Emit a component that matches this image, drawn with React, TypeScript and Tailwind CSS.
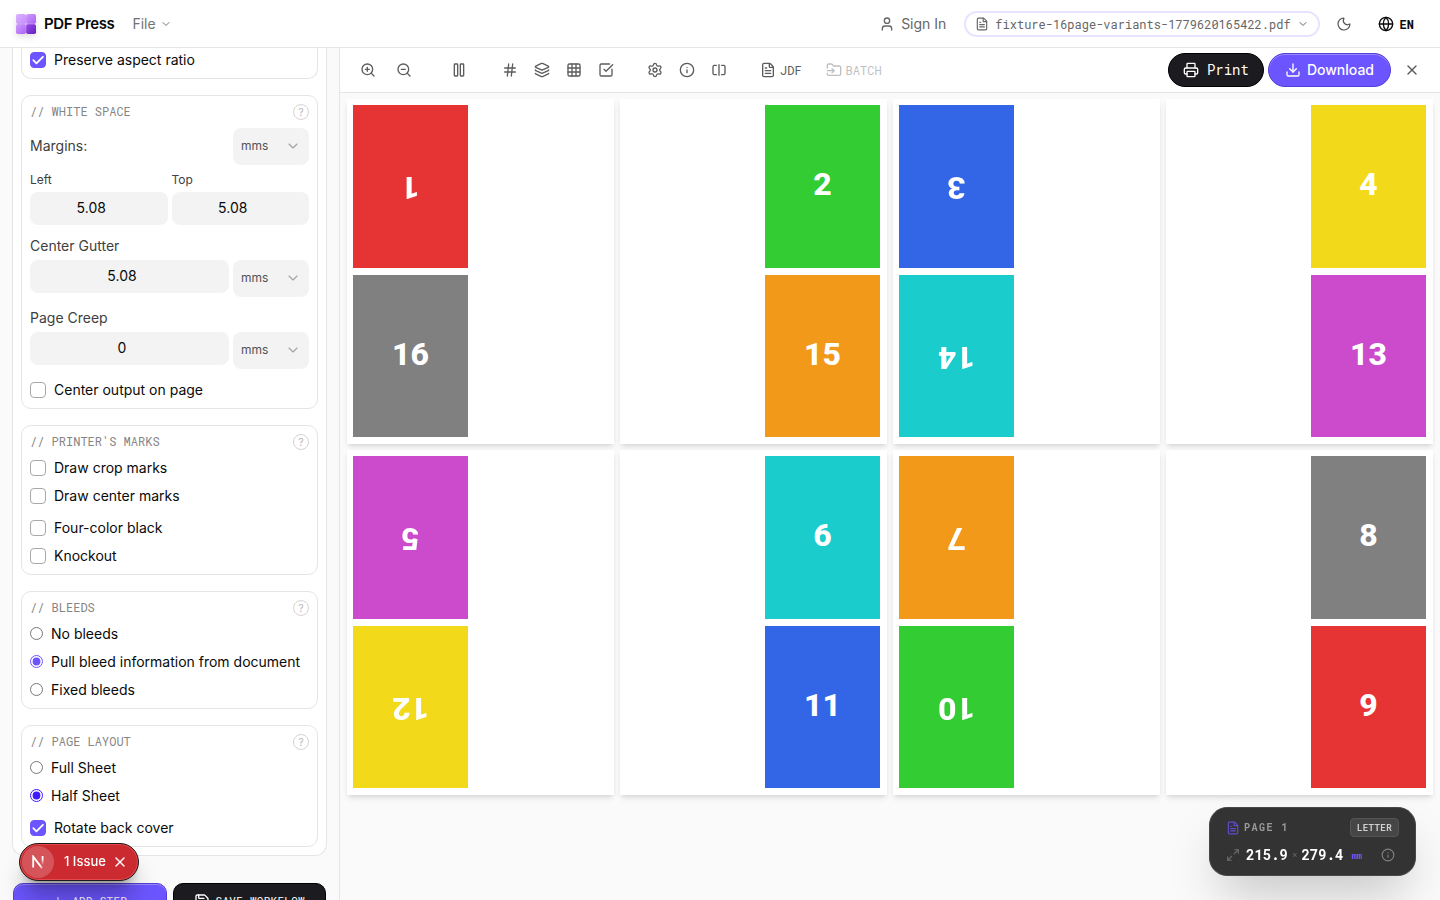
import { useState, type ReactNode } from 'react';
import {
  ChevronDown,
  Download,
  FileText,
  FolderInput,
  Globe,
  Grid3x3,
  Hash,
  Info,
  Layers,
  Maximize2,
  Moon,
  Pause,
  Plus,
  Printer,
  Save,
  Settings,
  SquareCheckBig,
  SquareSplitHorizontal,
  User,
  X,
  ZoomIn,
  ZoomOut,
} from 'lucide-react';

interface PageCell {
  label: number;
  color: string;
  flipped?: boolean;
}

const RED = 'bg-[#e63333]';
const GREEN = 'bg-[#33cc33]';
const BLUE = 'bg-[#3366e6]';
const YELLOW = 'bg-[#f2d91a]';
const MAGENTA = 'bg-[#cc4acc]';
const CYAN = 'bg-[#1acccc]';
const ORANGE = 'bg-[#f2991a]';
const GRAY = 'bg-[#808080]';

const sheets: PageCell[][] = [
  [{ label: 1, color: RED, flipped: true }, { label: 16, color: GRAY }],
  [{ label: 2, color: GREEN }, { label: 15, color: ORANGE }],
  [{ label: 3, color: BLUE, flipped: true }, { label: 14, color: CYAN, flipped: true }],
  [{ label: 4, color: YELLOW }, { label: 13, color: MAGENTA }],
  [{ label: 5, color: MAGENTA, flipped: true }, { label: 12, color: YELLOW, flipped: true }],
  [{ label: 6, color: CYAN }, { label: 11, color: BLUE }],
  [{ label: 7, color: ORANGE, flipped: true }, { label: 10, color: GREEN, flipped: true }],
  [{ label: 8, color: GRAY }, { label: 9, color: RED }],
];

const mono = "font-['Roboto_Mono','Liberation_Mono',monospace]";

function Logo() {
  return (
    <svg viewBox="0 0 20 20" className="w-5 h-5 drop-shadow-md" aria-hidden="true">
      <defs>
        <linearGradient id="lg-a" x1="0" y1="0" x2="1" y2="1">
          <stop offset="0" stopColor="#dcb4fe" />
          <stop offset="1" stopColor="#c48bfb" />
        </linearGradient>
        <linearGradient id="lg-b" x1="0" y1="0" x2="1" y2="1">
          <stop offset="0" stopColor="#cf9dfc" />
          <stop offset="1" stopColor="#ab62f3" />
        </linearGradient>
        <linearGradient id="lg-c" x1="0" y1="0" x2="1" y2="1">
          <stop offset="0" stopColor="#9a4de8" />
          <stop offset="1" stopColor="#6420bd" />
        </linearGradient>
      </defs>
      <rect x="1" y="1" width="18" height="18" fill="#d6b0fa" />
      <rect width="9.8" height="9.8" rx="1.8" fill="url(#lg-a)" />
      <rect x="10.2" width="9.8" height="9.8" rx="1.8" fill="url(#lg-b)" />
      <rect y="10.2" width="9.8" height="9.8" rx="1.8" fill="url(#lg-b)" />
      <rect x="10.2" y="10.2" width="9.8" height="9.8" rx="1.8" fill="url(#lg-c)" />
    </svg>
  );
}

function Section({ title, children }: { title: string; children: ReactNode }) {
  return (
    <section className="border border-[#e5e5e5] rounded-[10px] p-2">
      <div className="flex items-start justify-between h-4 mb-2">
        <h3 className={`${mono} text-xs leading-[14px] text-[#858585] uppercase`}>// {title}</h3>
        <button
          type="button"
          aria-label={`Help: ${title}`}
          className="w-4 h-4 rounded-full border border-[#d4d4d4] text-[10px] leading-none text-[#b5b5b5] flex items-center justify-center"
        >
          ?
        </button>
      </div>
      {children}
    </section>
  );
}

function Check({ label, defaultChecked = false }: { label: string; defaultChecked?: boolean }) {
  return (
    <label className="flex items-center gap-2 h-5 text-sm text-[#0a0a0a]">
      <span className="relative flex w-4 h-4">
        <input
          type="checkbox"
          defaultChecked={defaultChecked}
          className="peer appearance-none w-4 h-4 rounded-[4px] border border-[#a8a8a8] bg-white checked:bg-[#6c55ff] checked:border-[#6c55ff]"
        />
        <svg
          viewBox="0 0 16 16"
          className="absolute inset-0 w-4 h-4 hidden peer-checked:block pointer-events-none"
          fill="none"
          stroke="white"
          strokeWidth="1.8"
          strokeLinecap="round"
          strokeLinejoin="round"
        >
          <path d="M3.3 8.2 6.4 11.3 12.9 4.8" />
        </svg>
      </span>
      {label}
    </label>
  );
}

interface RadioProps {
  name: string;
  label: string;
  accent: string;
  defaultChecked?: boolean;
}

function Radio({ name, label, accent, defaultChecked = false }: RadioProps) {
  return (
    <label className="flex items-center gap-2 h-5 text-sm text-[#0a0a0a]">
      <input type="radio" name={name} defaultChecked={defaultChecked} className={`w-[13px] h-[13px] mb-px ${accent}`} />
      {label}
    </label>
  );
}

function NumberField({ id, initial }: { id: string; initial: string }) {
  const [value, setValue] = useState(initial);
  return (
    <input
      id={id}
      type="text"
      inputMode="decimal"
      value={value}
      onChange={(e) => setValue(e.target.value)}
      className="flex-1 min-w-0 w-full h-[33px] pl-2 pr-[23px] pb-0.5 rounded-lg bg-[#f3f3f3] text-sm text-center text-[#0a0a0a]"
    />
  );
}

function UnitSelect({ label }: { label: string }) {
  return (
    <div className="relative w-[76px] shrink-0">
      <select
        aria-label={label}
        className="appearance-none w-full h-[37px] px-2 pb-0.5 rounded-lg bg-[#f3f3f3] text-xs text-[#525252]"
      >
        <option>mms</option>
        <option>inches</option>
        <option>points</option>
      </select>
      <ChevronDown
        className="absolute right-2 top-2.5 w-4 h-4 text-[#a3a3a3] pointer-events-none"
        strokeWidth={1.75}
      />
    </div>
  );
}

function Tool({ label, children }: { label: string; children: ReactNode }) {
  return (
    <button type="button" aria-label={label} className="w-8 h-8 flex items-center justify-center">
      {children}
    </button>
  );
}

function Sheet({ cells, alignRight }: { cells: PageCell[]; alignRight: boolean }) {
  return (
    <div
      className={`aspect-[267/345] bg-white shadow-md flex flex-col gap-[7px] pt-1.5 pb-[7px] pl-1.5 pr-[7px] ${
        alignRight ? 'items-end' : 'items-start'
      }`}
    >
      {cells.map((cell) => (
        <div
          key={cell.label}
          className={`w-[45.3%] flex-1 flex items-center justify-center text-white text-[32px] leading-10 font-extrabold font-['Roboto',sans-serif] ${cell.color}`}
        >
          <span className={cell.flipped ? 'pb-1 rotate-180' : 'pb-1'}>{cell.label}</span>
        </div>
      ))}
    </div>
  );
}

function Header() {
  return (
    <header className="h-12 shrink-0 border-b border-[#e5e5e5] bg-white flex items-center pl-4 pr-[26px]">
      <a href="#" className="flex items-center gap-2 text-[#0a0a0a]">
        <Logo />
        <span className="pt-0.5 text-[15px] font-semibold tracking-tight">PDF Press</span>
      </a>
      <button type="button" className="ml-[18px] flex items-center gap-1 text-sm text-[#737373]">
        File
        <ChevronDown className="w-3 h-3" strokeWidth={2} />
      </button>

      <div className="ml-auto flex items-center">
        <a href="#" className="flex items-center gap-1.5 text-sm text-[#666666]">
          <User className="w-4 h-4" strokeWidth={2} />
          Sign In
        </a>
        <button
          type="button"
          className={`${mono} ml-[18px] h-[26px] px-[9px] flex items-center gap-1.5 rounded-full border-2 border-[#e6e3fe] text-xs text-[#666666]`}
        >
          <FileText className="w-3.5 h-3.5" strokeWidth={2} />
          fixture-16page-variants-1779620165422.pdf
          <ChevronDown className="w-3 h-3" strokeWidth={2} />
        </button>
        <button type="button" aria-label="Dark mode" className="ml-4 text-[#525252]">
          <Moon className="w-4 h-4" strokeWidth={1.75} />
        </button>
        <button
          type="button"
          className={`${mono} ml-[26px] flex items-center gap-1.5 text-xs font-bold text-[#0a0a0a]`}
        >
          <Globe className="w-4 h-4" strokeWidth={2} />
          EN
        </button>
      </div>
    </header>
  );
}

function Toolbar() {
  const icon = 'w-4 h-4';
  return (
    <div className="h-[45px] shrink-0 border-b border-[#e5e5e5] bg-white flex items-center pl-3 pr-3 text-[#5c5c5c]">
      <div className="flex gap-1">
        <Tool label="Zoom in"><ZoomIn className={icon} strokeWidth={2} /></Tool>
        <Tool label="Zoom out"><ZoomOut className={icon} strokeWidth={2} /></Tool>
      </div>
      <div className="flex ml-[23px]">
        <Tool label="Columns"><Pause className={icon} strokeWidth={2} /></Tool>
      </div>
      <div className="flex ml-[19px]">
        <Tool label="Page numbers"><Hash className={icon} strokeWidth={2} /></Tool>
        <Tool label="Layers"><Layers className={icon} strokeWidth={2} /></Tool>
        <Tool label="Grid"><Grid3x3 className={icon} strokeWidth={2} /></Tool>
        <Tool label="Preflight"><SquareCheckBig className={icon} strokeWidth={2} /></Tool>
      </div>
      <div className="flex ml-[17px]">
        <Tool label="Settings"><Settings className={icon} strokeWidth={2} /></Tool>
        <Tool label="Info"><Info className={icon} strokeWidth={2} /></Tool>
        <Tool label="Split view"><SquareSplitHorizontal className={icon} strokeWidth={2} /></Tool>
      </div>
      <button type="button" className={`${mono} ml-[25px] flex items-center gap-1 text-xs`}>
        <FileText className={icon} strokeWidth={2} />
        JDF
      </button>
      <button type="button" disabled className={`${mono} ml-6 flex items-center gap-1 text-xs text-[#bfbfbf]`}>
        <FolderInput className={icon} strokeWidth={2} />
        BATCH
      </button>

      <div className="ml-auto flex items-center">
        <button
          type="button"
          className={`${mono} mr-1 h-[34px] px-3.5 flex items-center gap-2 rounded-full border border-black bg-[#1c1c20] text-sm text-white`}
        >
          <Printer className={icon} strokeWidth={2} />
          Print
        </button>
        <button
          type="button"
          className="mr-[5px] h-[34px] px-4 flex items-center gap-1.5 rounded-full border border-[#513fd6] bg-[#6c55ff] text-sm font-medium text-white shadow-[inset_0_1px_0_rgba(255,255,255,0.3)]"
        >
          <Download className={icon} strokeWidth={2} />
          Download
        </button>
        <Tool label="Close preview"><X className={icon} strokeWidth={2} /></Tool>
      </div>
    </div>
  );
}

function Sidebar() {
  return (
    <aside className="w-[340px] shrink-0 overflow-hidden border-r border-[#e5e5e5] bg-[#fafafa] px-3">
      <div className="border border-t-0 border-[#e5e5e5] rounded-b-xl bg-white px-2 pb-2 flex flex-col gap-4">
        <div className="border border-t-0 border-[#e5e5e5] rounded-b-[10px] px-2 pt-0.5 pb-2">
          <Check label="Preserve aspect ratio" defaultChecked />
        </div>

        <Section title="White Space">
          <div className="flex items-center justify-between">
            <span className="pb-0.5 text-sm text-[#404040]">Margins:</span>
            <UnitSelect label="Margin unit" />
          </div>
          <div className="grid grid-cols-2 gap-x-1 mt-[7px]">
            <label htmlFor="margin-left" className="text-xs text-[#404040] mb-1">Left</label>
            <label htmlFor="margin-top" className="text-xs text-[#404040] mb-1">Top</label>
            <NumberField id="margin-left" initial="5.08" />
            <NumberField id="margin-top" initial="5.08" />
          </div>
          <label htmlFor="center-gutter" className="block mt-[11px] mb-1 text-sm text-[#404040]">
            Center Gutter
          </label>
          <div className="flex items-start gap-1">
            <NumberField id="center-gutter" initial="5.08" />
            <UnitSelect label="Center gutter unit" />
          </div>
          <label htmlFor="page-creep" className="block mt-[11px] mb-1 text-sm text-[#404040]">
            Page Creep
          </label>
          <div className="flex items-start gap-1 mb-[11px]">
            <NumberField id="page-creep" initial="0" />
            <UnitSelect label="Page creep unit" />
          </div>
          <Check label="Center output on page" />
        </Section>

        <Section title="Printer's Marks">
          <div className="flex flex-col gap-2">
            <Check label="Draw crop marks" />
            <Check label="Draw center marks" />
          </div>
          <div className="flex flex-col gap-2 mt-3">
            <Check label="Four-color black" />
            <Check label="Knockout" />
          </div>
        </Section>

        <Section title="Bleeds">
          <div className="flex flex-col gap-2">
            <Radio name="bleeds" label="No bleeds" accent="accent-[#6c55ff]" />
            <Radio name="bleeds" label="Pull bleed information from document" accent="accent-[#6c55ff]" defaultChecked />
            <Radio name="bleeds" label="Fixed bleeds" accent="accent-[#6c55ff]" />
          </div>
        </Section>

        <Section title="Page Layout">
          <div className="flex flex-col gap-2 mb-3">
            <Radio name="layout" label="Full Sheet" accent="accent-[#3d1aff]" />
            <Radio name="layout" label="Half Sheet" accent="accent-[#3d1aff]" defaultChecked />
          </div>
          <Check label="Rotate back cover" defaultChecked />
        </Section>
      </div>

      <div className={`${mono} mt-[27px] px-px grid grid-cols-2 gap-1.5 text-[11px] tracking-wide text-white`}>
        <button
          type="button"
          className="h-9 flex items-center justify-center gap-2 rounded-[10px] border border-[#513fd6] bg-[#6c55ff] shadow-[inset_0_1px_0_rgba(255,255,255,0.3)]"
        >
          <Plus className="w-3 h-3" strokeWidth={2} />
          ADD STEP
        </button>
        <button
          type="button"
          className="h-9 flex items-center justify-center gap-1.5 rounded-[10px] border border-black bg-[#1c1c20]"
        >
          <Save className="w-4 h-4" strokeWidth={2} />
          SAVE WORKFLOW
        </button>
      </div>
    </aside>
  );
}

function PageInfoCard() {
  return (
    <div className={`${mono} fixed right-6 bottom-6 w-[207px] rounded-[18px] border border-[#484848] bg-[#333333] px-4 py-2.5 shadow-2xl`}>
      <div className="flex items-center gap-1">
        <FileText className="w-3.5 h-3.5 text-[#5f4ccc]" strokeWidth={2} />
        <span className="text-[10px] tracking-[0.15em] font-bold text-[#9a9a9a]">PAGE 1</span>
        <span className="ml-auto h-[19px] px-1.5 flex items-center rounded-[4px] border border-[#555555] bg-[#464646] text-[9px] tracking-wider font-bold text-[#cfcfcf]">
          LETTER
        </span>
      </div>
      <div className="mt-2 flex items-center text-sm font-bold text-white">
        <Maximize2 className="w-3.5 h-3.5 mr-1.5 text-[#6e6e6e]" strokeWidth={2} />
        215.9
        <span className="mx-1 text-[9px] font-normal text-[#666666]">×</span>
        279.4
        <span className="ml-2 mt-0.5 text-[9px] font-bold text-[#6c55ff]">mm</span>
        <button type="button" aria-label="Page details" className="ml-auto mr-1 text-[#808080]">
          <Info className="w-3.5 h-3.5" strokeWidth={2} />
        </button>
      </div>
    </div>
  );
}

function IssueBadge() {
  return (
    <div className="fixed left-[19px] bottom-[19px] h-[38px] pl-0.5 pr-2.5 flex items-center rounded-full border border-[#1a1a1a] bg-[#ca2a30] text-[13px] font-medium text-white shadow-xl shadow-black/30 inset-ring inset-ring-[#e5484d]">
      <span className="w-8 h-8 rounded-full bg-white/20 flex items-center justify-center">
        <svg viewBox="0 0 14 14" className="w-3.5 h-3.5" fill="none" aria-hidden="true">
          <defs>
            <linearGradient id="n-diag" x1="6" y1="6" x2="12" y2="13" gradientUnits="userSpaceOnUse">
              <stop offset="0.6" stopColor="white" />
              <stop offset="1" stopColor="white" stopOpacity="0.3" />
            </linearGradient>
            <linearGradient id="n-stem" x1="0" y1="1" x2="0" y2="10" gradientUnits="userSpaceOnUse">
              <stop offset="0.3" stopColor="white" />
              <stop offset="1" stopColor="white" stopOpacity="0" />
            </linearGradient>
          </defs>
          <path d="M2.2 12.6V1.6L11.2 13.4" stroke="url(#n-diag)" strokeWidth="1.8" />
          <path d="M11.6 1v9" stroke="url(#n-stem)" strokeWidth="1.8" />
        </svg>
      </span>
      <button type="button" className="ml-2.5">1 Issue</button>
      <button type="button" aria-label="Dismiss" className="ml-1.5">
        <X className="w-4 h-4" strokeWidth={2} />
      </button>
    </div>
  );
}

export default function App() {
  return (
    <div className="h-screen overflow-hidden flex flex-col bg-[#fafafa] font-['Inter',sans-serif]">
      <Header />
      <div className="flex-1 min-h-0 flex">
        <Sidebar />
        <main className="flex-1 min-w-0 flex flex-col">
          <Toolbar />
          <div className="flex-1 min-h-0 overflow-hidden px-[7px] pt-1.5">
            <div className="grid grid-cols-4 gap-1.5">
              {sheets.map((cells, i) => (
                <Sheet key={cells[0].label} cells={cells} alignRight={i % 2 === 1} />
              ))}
            </div>
          </div>
        </main>
      </div>
      <PageInfoCard />
      <IssueBadge />
    </div>
  );
}
